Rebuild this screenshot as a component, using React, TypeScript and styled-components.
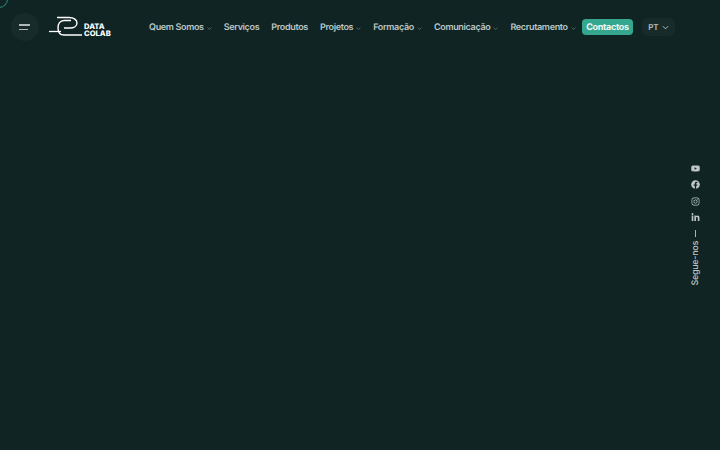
import React from "react";
import styled, { createGlobalStyle } from "styled-components";
import { FaYoutube, FaFacebook, FaInstagram, FaLinkedinIn } from "react-icons/fa";

const Global = createGlobalStyle`
  html, body { margin: 0; padding: 0; height: 100%; background: #102423; overflow: hidden; }
  #root { height: 100%; }
`;

const Page = styled.div`
  position: relative;
  width: 720px;
  height: 450px;
  background: #102423;
  font-family: Inter, "Open Sans", "Liberation Sans", sans-serif;
  text-rendering: geometricPrecision;
  overflow: hidden;
`;

const CursorRing = styled.div`
  position: absolute;
  left: -10px;
  top: -10px;
  width: 16px;
  height: 16px;
  border: 1px solid #2f8f7b;
  border-radius: 50%;
`;

const Header = styled.header`
  display: flex;
  align-items: center;
  height: 28px;
  padding: 13px 0 0 11px;
`;

const MenuButton = styled.button`
  flex: none;
  display: flex;
  flex-direction: column;
  align-items: flex-start;
  justify-content: center;
  gap: 3px;
  width: 28px;
  height: 28px;
  padding: 0 0 0 8px;
  border: 0;
  border-radius: 50%;
  background: #182b2b;
`;

const MenuLine = styled.span<{ $w: number }>`
  display: block;
  width: ${(p) => p.$w}px;
  height: 1.5px;
  background: #aeb9b8;
`;

const LogoLink = styled.a`
  flex: none;
  display: flex;
  align-items: flex-end;
  width: 62px;
  height: 22px;
  margin-left: 10px;
`;

const LogoMark = styled.svg`
  flex: none;
  width: 35px;
  height: 22px;
`;

const Wordmark = styled.div`
  display: flex;
  flex-direction: column;
  padding-bottom: 1px;
  color: #fff;
  font-size: 7.6px;
  font-weight: 800;
  line-height: 7px;
`;

const WordLine = styled.span`
  display: block;
  height: 7px;
`;

const Nav = styled.nav`
  display: flex;
  align-items: center;
  margin: 1px 0 0 38px;
  gap: 12px;
`;

const NavItem = styled.a`
  display: flex;
  align-items: center;
  gap: 3px;
  color: #bcc7c6;
  font-size: 9px;
  font-weight: 600;
  letter-spacing: -0.33px;
  white-space: nowrap;
`;

const Caret = styled.svg`
  width: 5px;
  height: 5px;
  margin-top: 2px;
  opacity: 0.5;
`;

const ContactButton = styled.a`
  margin: -1px 0 0 -6px;
  padding: 0 4.5px;
  height: 16px;
  line-height: 17px;
  border-radius: 4px;
  background: #36a78f;
  color: #eef7f5;
  font-size: 9px;
  font-weight: 700;
  letter-spacing: -0.33px;
`;

const Lang = styled.div`
  display: flex;
  align-items: center;
  gap: 3px;
  width: 27px;
  height: 18px;
  margin: -1px 0 0 -3px;
  padding-left: 6px;
  border-radius: 6px;
  background: #182b2b;
  color: #bcc7c6;
  font-size: 8px;
  font-weight: 600;
`;

const Social = styled.aside`
  position: absolute;
  top: 164px;
  right: 20px;
  display: flex;
  flex-direction: column;
  align-items: center;
  width: 9px;
  color: #bcc7c6;
`;

const SocialLink = styled.a`
  display: flex;
  align-items: center;
  justify-content: center;
  height: 9px;
  margin-bottom: 7.4px;
  font-size: 9px;
`;

const Divider = styled.div`
  width: 1px;
  height: 7px;
  background: #aab6b5;
`;

const Follow = styled.span`
  margin-top: 4px;
  writing-mode: vertical-rl;
  transform: rotate(180deg);
  font-size: 9px;
  font-weight: 500;
  letter-spacing: -0.3px;
  white-space: nowrap;
`;

const items: { label: string; caret?: boolean }[] = [
  { label: "Quem Somos", caret: true },
  { label: "Serviços" },
  { label: "Produtos" },
  { label: "Projetos", caret: true },
  { label: "Formação", caret: true },
  { label: "Comunicação", caret: true },
  { label: "Recrutamento", caret: true },
];

export default function App() {
  return (
    <Page>
      <Global />
      <CursorRing />
      <Header>
        <MenuButton aria-label="Menu">
          <MenuLine $w={11} />
          <MenuLine $w={9} />
        </MenuButton>
        <LogoLink>
          <LogoMark viewBox="0 0 35 22" fill="none">
            <path d="M8 1.5H20C25 1.5 28 4 28 7C28 10 25 12 21 12H15" stroke="#fff" strokeWidth="1.4" />
            <path d="M22 4.5H15C11 4.5 9 8 9 12C9 16 11 19 15 19H33" stroke="#fff" strokeWidth="1.4" />
            <path d="M0 15.5H12" stroke="#fff" strokeWidth="1.3" />
          </LogoMark>
          <Wordmark>
            <WordLine>DATA</WordLine>
            <WordLine>COLAB</WordLine>
          </Wordmark>
        </LogoLink>
        <Nav>
          {items.map((it) => (
            <NavItem key={it.label}>
              {it.label}
              {it.caret && (
                <Caret viewBox="0 0 8 8" fill="none">
                  <path d="M1 2.5L4 5.5L7 2.5" stroke="#c4cecd" strokeWidth="1.2" />
                </Caret>
              )}
            </NavItem>
          ))}
          <ContactButton>Contactos</ContactButton>
          <Lang>
            PT
            <svg width="7" height="7" viewBox="0 0 8 8" fill="none">
              <path d="M1 2.5L4 5.5L7 2.5" stroke="#c4cecd" strokeWidth="1" />
            </svg>
          </Lang>
        </Nav>
      </Header>
      <Social>
        <SocialLink><FaYoutube /></SocialLink>
        <SocialLink><FaFacebook /></SocialLink>
        <SocialLink><FaInstagram /></SocialLink>
        <SocialLink><FaLinkedinIn /></SocialLink>
        <Divider />
        <Follow>Segue-nos</Follow>
      </Social>
    </Page>
  );
}
